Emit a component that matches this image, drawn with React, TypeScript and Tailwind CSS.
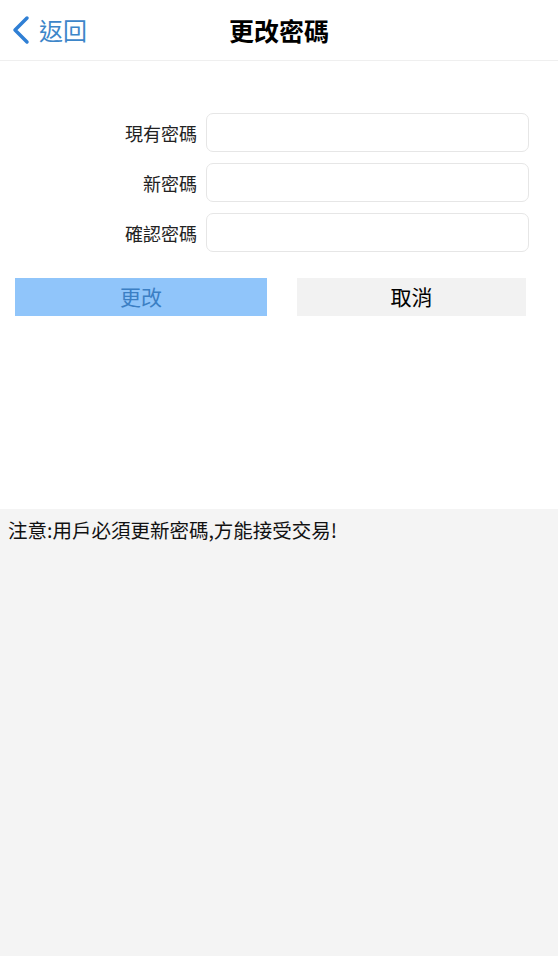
import React from 'react';

const font = { fontFamily: '"Noto Sans CJK TC", "Noto Sans", sans-serif' };

// Back chevron
const Chevron = () => (
    <svg width="22" height="30" viewBox="0 0 22 30" fill="none">
        <path d="M17 3L5 15l12 12" stroke="#2f7fd4" strokeWidth="3.5" strokeLinecap="round" strokeLinejoin="round" />
    </svg>
);

const Field: React.FC<{ label: string }> = ({ label }) => (
    <div className="flex items-center">
        <div className="w-[206px] pr-[9px] text-right text-[18px] leading-[24px] text-[#222]">{label}</div>
        <div className="w-[323px] h-[39px] rounded-[7px] border border-[#e6e6e6] bg-white" />
    </div>
);

export default function App() {
    return (
        <div className="w-[558px] h-[956px] flex flex-col bg-white" style={font}>
            {/* Header */}
            <div className="relative h-[61px] shrink-0 flex items-center border-b border-[#efefef]">
                <div className="flex items-center pl-[10px] gap-[7px]">
                    <Chevron />
                    <span className="text-[24px] text-[#3d86c9]">返回</span>
                </div>
                <div className="absolute left-0 right-0 top-0 h-[61px] flex items-center justify-center pointer-events-none">
                    <span className="text-[25px] font-bold text-black">更改密碼</span>
                </div>
            </div>

            {/* Form */}
            <div className="flex flex-col gap-[11px] pt-[52px]">
                <Field label="現有密碼" />
                <Field label="新密碼" />
                <Field label="確認密碼" />
            </div>

            <div className="flex pl-[15px] pt-[26px] gap-[30px]">
                <div className="w-[252px] h-[38px] bg-[#90c5fa] flex items-center justify-center text-[21px] text-[#3b7fc4]">更改</div>
                <div className="w-[229px] h-[38px] bg-[#f2f2f2] flex items-center justify-center text-[21px] text-black">取消</div>
            </div>

            <div className="h-[193px] shrink-0" />

            {/* Notice */}
            <div className="flex-1 bg-[#f4f4f4] px-[8px] pt-[6px]">
                <p className="text-[19.5px] leading-[30px] text-[#111]">注意:用戶必須更新密碼,方能接受交易!</p>
            </div>
        </div>
    );
}
